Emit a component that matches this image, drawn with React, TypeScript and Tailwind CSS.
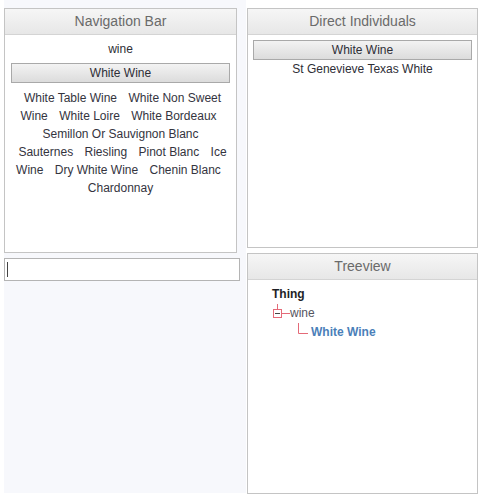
import React from 'react';

const subclasses = [
    'White Table Wine',
    'White Non Sweet Wine',
    'White Loire',
    'White Bordeaux',
    'Semillon Or Sauvignon Blanc',
    'Sauternes',
    'Riesling',
    'Pinot Blanc',
    'Ice Wine',
    'Dry White Wine',
    'Chenin Blanc',
    'Chardonnay',
];

const PanelHeader: React.FC<{ title: string }> = ({ title }) => (
    <div className="h-[26px] shrink-0 border-b border-[#d4d4d4] bg-gradient-to-b from-[#f6f6f6] to-[#e7e7e7] flex items-center justify-center text-[14px] text-[#6a6a6a]">
        {title}
    </div>
);

const SelectedButton: React.FC<{ label: string }> = ({ label }) => (
    <div className="h-[20px] border border-[#a9a9a9] bg-gradient-to-b from-[#f3f3f3] to-[#dcdcdc] flex items-center justify-center text-[12px] text-[#2e2e36]">
        {label}
    </div>
);

const App: React.FC = () => {
    return (
        <div className="w-[480px] h-[498px] bg-white flex font-['Liberation_Sans',Arial,sans-serif]">
            {/* Left column */}
            <div className="ml-[4px] w-[242px] h-[493px] bg-[#f7f8fc] pt-[8px] flex flex-col">
                <div className="w-[233px] h-[245px] border border-[#c4c4c4] bg-white flex flex-col">
                    <PanelHeader title="Navigation Bar" />
                    <div className="pt-[5px] text-center text-[12px] leading-[18px] text-[#2e2e36]">wine</div>
                    <div className="mx-[6px] mt-[5px]">
                        <SelectedButton label="White Wine" />
                    </div>
                    <div className="mt-[6px] px-[8px] text-center text-[12px] leading-[18px] text-[#34343e]">
                        {subclasses.map((name) => (
                            <span key={name} className="mx-[4px]">
                                {name}{' '}
                            </span>
                        ))}
                    </div>
                </div>
                <div className="relative mt-[5px] w-[236px]">
                    <input
                        type="text"
                        className="block w-full h-[23px] border border-[#b4b4b4] bg-white outline-none"
                    />
                    <span className="absolute left-[3px] top-[4px] w-[1px] h-[15px] bg-[#444]" />
                </div>
            </div>

            {/* Right column */}
            <div className="ml-[1px] w-[231px] pt-[8px] flex flex-col">
                <div className="h-[240px] border border-[#c4c4c4] bg-white flex flex-col">
                    <PanelHeader title="Direct Individuals" />
                    <div className="mx-[5px] mt-[5px]">
                        <SelectedButton label="White Wine" />
                    </div>
                    <div className="text-center text-[12px] leading-[18px] text-[#2e2e36]">St Genevieve Texas White</div>
                </div>

                <div className="mt-[5px] h-[241px] border border-[#c4c4c4] bg-white flex flex-col">
                    <PanelHeader title="Treeview" />
                    <div className="pt-[5px] pl-[24px] text-[12px] leading-[19px]">
                        <div className="font-bold text-[#1e1e26]">Thing</div>
                        <div className="flex items-center">
                            <svg width="18" height="19" viewBox="0 0 18 19" className="shrink-0">
                                <path d="M5.5 0V5.5" stroke="#e46a78" strokeWidth="1" fill="none" />
                                <rect x="1.5" y="5.5" width="8" height="8" stroke="#e46a78" strokeWidth="1" fill="#fff" />
                                <path d="M3 9.5H8" stroke="#444" strokeWidth="1" />
                                <path d="M9.5 9.5H18" stroke="#e46a78" strokeWidth="1" />
                            </svg>
                            <span className="text-[#555560]">wine</span>
                        </div>
                        <div className="flex items-center pl-[24px]">
                            <svg width="13" height="19" viewBox="0 0 13 19" className="shrink-0">
                                <path d="M2.5 0V10.5H12" stroke="#e46a78" strokeWidth="1" fill="none" />
                            </svg>
                            <span className="ml-[2px] font-bold text-[#4b7fb9]">White Wine</span>
                        </div>
                    </div>
                </div>
            </div>
        </div>
    );
};

export default App;
